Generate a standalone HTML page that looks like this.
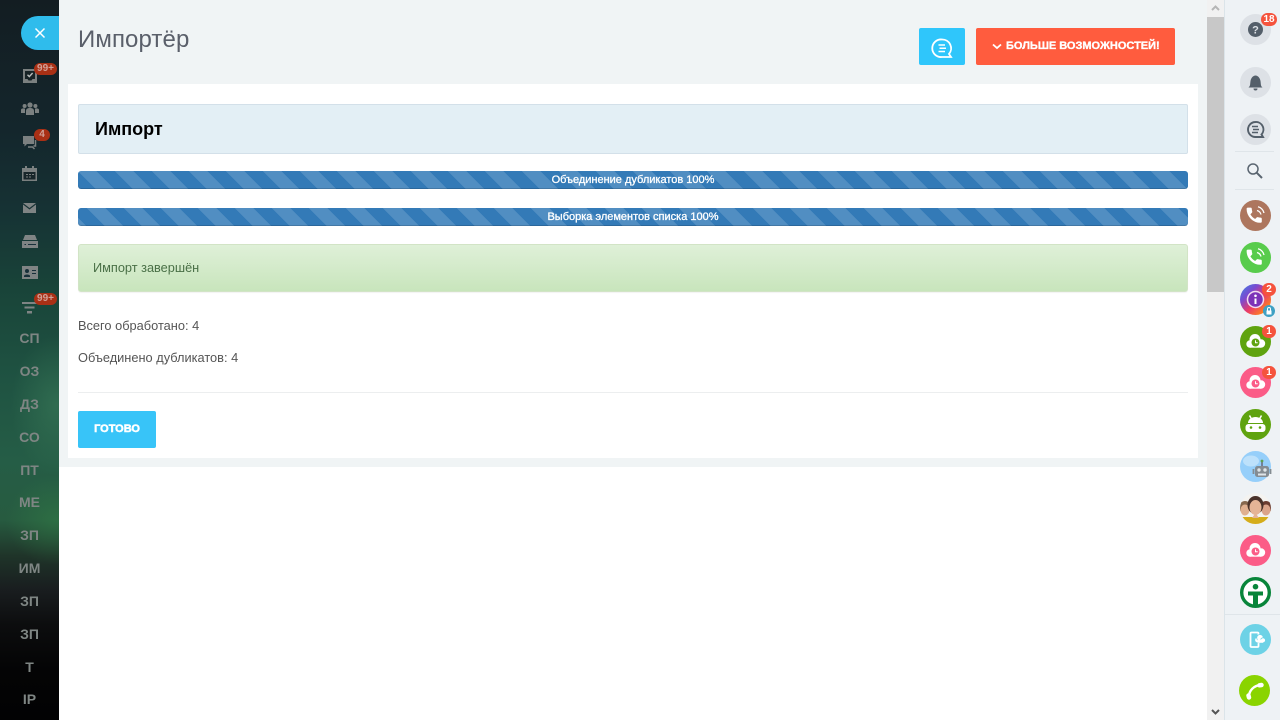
<!DOCTYPE html>
<html lang="ru"><head><meta charset="utf-8"><title>Импортёр</title>
<style>
*{box-sizing:border-box}
html,body{margin:0;padding:0;width:1280px;height:720px;overflow:hidden;background:#fff;font-family:"Liberation Sans","Noto Sans CJK SC",sans-serif}
.a{position:absolute}
#side{left:0;top:0;width:59px;height:720px;background:
radial-gradient(ellipse 45px 70px at 56px 405px,rgba(60,125,90,.55),rgba(60,125,90,0) 100%),
radial-gradient(ellipse 50px 45px at 56px 520px,rgba(50,125,70,.55),rgba(50,125,70,0) 100%),
linear-gradient(180deg,#131d22 0,#14262c 130px,#163234 210px,#194439 290px,#1f5342 380px,#255d46 460px,#275b40 520px,#1f3429 556px,#191d1f 590px,#0c0d0e 625px,#040405 670px,#020203 720px)}
.lab{position:absolute;left:0;width:59px;text-align:center;color:#7f8684;font-weight:bold;font-size:14px;line-height:16px}
.bdg{position:absolute;background:#a93015;color:#d0a097;font-size:10px;font-weight:bold;line-height:12px;height:12px;border-radius:6px;text-align:center}
#tog{left:21px;top:16px;width:38px;height:34px;background:#2fbcec;border-radius:17px 0 0 17px}
#main{left:59px;top:0;width:1148px;height:467px;background:#f0f4f5}
#card{left:68px;top:84px;width:1130px;height:374px;background:#fff}
#h1{left:78px;top:25px;font-size:24px;line-height:30px;color:#5a5f6a;letter-spacing:.1px;font-weight:normal}
#hd{left:78px;top:104px;width:1110px;height:50px;background:#e3eff5;border:1px solid #d3e0e9;border-radius:2px;font-size:18px;font-weight:bold;line-height:48px;padding-left:16px;color:#000}
.bar{position:absolute;left:78px;width:1110px;height:18px;border-radius:3px;background-color:#337ab7;background-image:linear-gradient(45deg,rgba(255,255,255,.15) 25%,transparent 25%,transparent 50%,rgba(255,255,255,.15) 50%,rgba(255,255,255,.15) 75%,transparent 75%,transparent);background-size:37px 37px;color:#fff;font-size:11px;line-height:18px;text-align:center;-webkit-text-stroke:.3px #fff;box-shadow:inset 0 -1px 0 rgba(0,0,0,.15)}
#ok{left:78px;top:244px;width:1110px;height:48px;border:1px solid #d2e4c6;border-radius:3px;background:linear-gradient(180deg,#dff0d8,#c8e5bc);color:#4a7047;font-size:12.75px;line-height:46px;padding-left:14px;box-shadow:0 1px 1px rgba(0,0,0,.05)}
.t{position:absolute;left:78px;font-size:12.8px;line-height:16px;color:#555}
#hr{left:78px;top:392px;width:1110px;height:1px;background:#eceeef}
#go{left:78px;top:411px;width:78px;height:37px;background:#38c4f8;border-radius:2px;color:#fff;font-weight:bold;font-size:11px;line-height:36px;text-align:center;-webkit-text-stroke:.5px #fff}
#b1{left:919px;top:28px;width:46px;height:37px;background:#2fc6fb;border-radius:2px}
#b2{left:976px;top:28px;width:199px;height:37px;background:#ff5c3e;border-radius:2px;color:#fff;font-weight:bold;font-size:11px;line-height:37px;padding-left:30px;white-space:nowrap;-webkit-text-stroke:.35px #fff}
#st{left:1207px;top:0;width:17px;height:720px;background:#f1f1f1}
#th{left:1207px;top:17px;width:17px;height:275px;background:#c8c8c8}
#rp{left:1224px;top:0;width:56px;height:720px;background:#eef2f5;border-left:1px solid #dbe4e9}
.ln{position:absolute;left:1235px;width:39px;height:1px;background:#dfe5e9}
svg{position:absolute;overflow:visible}
.rb{position:absolute;color:#fff;font-size:10px;font-weight:bold;text-align:center;background:#f5533d;border-radius:7px;line-height:13px;height:13px}
</style></head><body>
<div class="a" id="side"></div>
<div class="a" id="tog"></div>
<svg style="left:34px;top:27px" width="12" height="12" viewBox="0 0 12 12"><path d="M1.500 1.500L10.500 10.500M10.500 1.500L1.500 10.500" stroke="#fff" stroke-width="1.500"/></svg>

<svg style="left:22px;top:68px" width="16" height="16" viewBox="0 0 16 16"><path d="M1 1H15V15H1Z" fill="#7b8080"/><path d="M3 3H13V11H10.500L9.500 12.500H6.500L5.500 11H3Z" fill="#172326"/><path d="M5.500 6.800L7.300 8.600L10.600 5" stroke="#b8bcbc" stroke-width="1.400" fill="none"/></svg>
<div class="bdg" style="left:34px;top:63px;width:23px">99+</div>
<svg style="left:21px;top:102px" width="18" height="14" viewBox="0 0 18 14" fill="#7b8080"><circle cx="9" cy="3" r="2.600"/><circle cx="3.600" cy="4" r="2"/><circle cx="14.400" cy="4" r="2"/><path d="M5 13V9C5 6.500 7 6 9 6S13 6.500 13 9V13Z"/><path d="M0 11V8C0 6.600 1.500 6.400 3.600 6.400L4 7V11Z"/><path d="M18 11V8C18 6.600 16.500 6.400 14.400 6.400L14 7V11Z"/></svg>
<svg style="left:22px;top:135px" width="16" height="15" viewBox="0 0 16 15"><path d="M1 1H12V9H5L2.500 11.500V9H1Z" fill="#7b8080"/><path d="M13.500 5V11H11.500" stroke="#7b8080" stroke-width="1.500" fill="none"/><path d="M6 12H10.500L12.500 14" stroke="#7b8080" stroke-width="1.500" fill="none"/></svg>
<div class="bdg" style="left:34px;top:129px;width:16px">4</div>
<svg style="left:22px;top:166px" width="15" height="15" viewBox="0 0 15 15"><path d="M0 2H15V15H0Z" fill="#7b8080"/><path d="M1.500 6H13.500V13.500H1.500Z" fill="#18262a"/><path d="M3 0H5V3H3ZM10 0H12V3H10Z" fill="#7b8080"/><path d="M4 8H6V9H4ZM7 8H9V9H7ZM10 8H12V9H10ZM4 10.500H6V11.500H4ZM7 10.500H9V11.500H7Z" fill="#7b8080"/></svg>
<svg style="left:23px;top:203px" width="13" height="10" viewBox="0 0 13 10"><path d="M0 0H13L6.500 5Z" fill="#7f8484"/><path d="M0 1.500L6.500 6.500L13 1.500V10H0Z" fill="#7f8484"/></svg>
<svg style="left:22px;top:235px" width="16" height="13" viewBox="0 0 16 13" fill="#7f8484"><path d="M3 0H13L15 5H1Z"/><path d="M0 6H16V13H0Z"/><path d="M2.500 9H4V10H2.500Z" fill="#18303a"/><path d="M6 9H14V10H6Z" fill="#18303a"/></svg>
<svg style="left:22px;top:266px" width="16" height="13" viewBox="0 0 16 13"><path d="M0 0H16V13H0Z" fill="#7f8484"/><circle cx="5" cy="5" r="2" fill="#18303a"/><path d="M2 10C2 8 8 8 8 10V11H2Z" fill="#18303a"/><path d="M10 4H14V5H10ZM10 7H14V8H10Z" fill="#18303a"/></svg>
<svg style="left:22px;top:302px" width="15" height="12" viewBox="0 0 15 12" fill="#7f8484"><path d="M0 0H15V2H0ZM2.500 4.500H12.500V6.500H2.500ZM5 9H10V11.500H5Z"/></svg>
<div class="bdg" style="left:34px;top:293px;width:23px">99+</div>

<div class="lab" style="top:330px">СП</div>
<div class="lab" style="top:363px">ОЗ</div>
<div class="lab" style="top:396px">ДЗ</div>
<div class="lab" style="top:429px">СО</div>
<div class="lab" style="top:462px">ПТ</div>
<div class="lab" style="top:494px">МЕ</div>
<div class="lab" style="top:527px">ЗП</div>
<div class="lab" style="top:560px">ИМ</div>
<div class="lab" style="top:593px">ЗП</div>
<div class="lab" style="top:626px">ЗП</div>
<div class="lab" style="top:659px">Т</div>
<div class="lab" style="top:691px">IP</div>

<div class="a" id="main"></div>
<div class="a" id="card"></div>
<div class="a" id="h1">Импортёр</div>
<div class="a" id="b1"></div>
<svg style="left:931px;top:37px" width="22" height="22" viewBox="0 0 22 22" fill="none" stroke="#fff"><path d="M11 2.500A8.800 8.800 0 1 0 11 20H20L18 17A8.800 8.800 0 0 0 11 2.500Z" stroke-width="1.800"/><path d="M7.500 8H14M8.500 11.200H15M7.500 14.500H14" stroke-width="1.500"/></svg>
<div class="a" id="b2">БОЛЬШЕ ВОЗМОЖНОСТЕЙ!</div>
<svg style="left:992px;top:43px" width="10" height="7" viewBox="0 0 10 7"><path d="M1 1.500L5 5L9 1.500" stroke="#fff" stroke-width="1.800" fill="none"/></svg>
<div class="a" id="hd">Импорт</div>
<div class="bar" style="top:171px">Объединение дубликатов 100%</div>
<div class="bar" style="top:208px;background-position:9px 0">Выборка элементов списка 100%</div>
<div class="a" id="ok">Импорт завершён</div>
<div class="t" style="top:318px">Всего обработано: 4</div>
<div class="t" style="top:350px">Объединено дубликатов: 4</div>
<div class="a" id="hr"></div>
<div class="a" id="go">ГОТОВО</div>

<div class="a" id="st"></div>
<div class="a" id="th"></div>
<svg style="left:1211px;top:5px" width="9" height="6" viewBox="0 0 9 6"><path d="M1 5L4.500 1.500L8 5" stroke="#b5b5b5" stroke-width="2" fill="none"/></svg>
<svg style="left:1211px;top:709px" width="9" height="6" viewBox="0 0 9 6"><path d="M1 1L4.500 4.500L8 1" stroke="#555" stroke-width="2" fill="none"/></svg>
<div class="a" id="rp"></div>
<div class="ln" style="top:151px"></div>
<div class="ln" style="top:189px"></div>
<div class="ln" style="top:614px;left:1225px;width:55px"></div>

<svg style="left:1240px;top:14px" width="31" height="31" viewBox="0 0 31 31"><circle cx="15.500" cy="15.500" r="15.500" fill="#dde1e6"/><circle cx="15.500" cy="15.500" r="7.500" fill="#545f6a"/><text x="15.500" y="19.500" font-family="Liberation Sans" font-size="11" font-weight="bold" fill="#dde1e6" text-anchor="middle">?</text></svg>
<div class="rb" style="left:1261px;top:13px;width:16px">18</div>
<svg style="left:1240px;top:67px" width="31" height="31" viewBox="0 0 31 31"><circle cx="15.500" cy="15.500" r="15.500" fill="#dde1e6"/><path d="M8.500 20.500C10.500 19 10 17 10.500 14C11 11 13 8.500 15.500 8.500S20 11 20.500 14C21 17 20.500 19 22.500 20.500Z" fill="#545f6a"/><path d="M13.500 21.500A2 2 0 0 0 17.500 21.500Z" fill="#545f6a"/></svg>
<svg style="left:1240px;top:114px" width="31" height="31" viewBox="0 0 31 31" fill="none" stroke="#545f6a"><circle cx="15.500" cy="15.500" r="15.500" fill="#dde1e6" stroke="none"/><path d="M15.500 8A7.500 7.500 0 1 0 15.500 23H23L21.500 20.500A7.500 7.500 0 0 0 15.500 8Z" stroke-width="1.900"/><path d="M12 12.500H18M13 15.500H19M12 18.500H18" stroke-width="1.400"/></svg>
<svg style="left:1246px;top:162px" width="18" height="18" viewBox="0 0 18 18" fill="none" stroke="#5a6570"><circle cx="7" cy="7" r="5" stroke-width="1.500"/><path d="M10.800 10.800L16 16" stroke-width="2"/></svg>

<svg style="left:1240px;top:200px" width="31" height="31" viewBox="0 0 31 31"><circle cx="15.500" cy="15.500" r="15.500" fill="#ad765e"/><path transform="translate(4.600 5.600) scale(.8)" d="M6.620 10.790c1.440 2.830 3.760 5.140 6.590 6.590l2.200-2.200c.27-.27.67-.36 1.020-.24 1.120.37 2.330.57 3.570.57.550 0 1 .45 1 1V20c0 .55-.45 1-1 1-9.390 0-17-7.610-17-17 0-.55.45-1 1-1h3.500c.55 0 1 .45 1 1 0 1.250.2 2.450.57 3.570.11.350.03.74-.25 1.020l-2.200 2.200z" fill="#fff" stroke="#fff"/><path d="M17 10.500C19 11 20.500 12.500 21 14.500M18 6.800C21 7.500 23.500 10 24 13" stroke="#fff" stroke-width="1.300" fill="none"/></svg>
<svg style="left:1240px;top:242px" width="31" height="31" viewBox="0 0 31 31"><circle cx="15.500" cy="15.500" r="15.500" fill="#58cc4c"/><path transform="translate(4.600 5.600) scale(.8)" d="M6.620 10.790c1.440 2.830 3.760 5.140 6.590 6.590l2.200-2.200c.27-.27.67-.36 1.020-.24 1.120.37 2.330.57 3.570.57.550 0 1 .45 1 1V20c0 .55-.45 1-1 1-9.390 0-17-7.610-17-17 0-.55.45-1 1-1h3.500c.55 0 1 .45 1 1 0 1.250.2 2.450.57 3.570.11.350.03.74-.25 1.020l-2.200 2.200z" fill="#fff" stroke="#fff"/><path d="M17 10.500C19 11 20.500 12.500 21 14.500M18 6.800C21 7.500 23.500 10 24 13" stroke="#fff" stroke-width="1.300" fill="none"/></svg>

<svg style="left:1240px;top:284px" width="31" height="31" viewBox="0 0 31 31"><defs><linearGradient id="ig" x1="0" y1="0" x2="1" y2="1"><stop offset="0" stop-color="#3a86e6"/><stop offset=".3" stop-color="#7a4ad0"/><stop offset=".55" stop-color="#ea3a6a"/><stop offset=".8" stop-color="#fb7a2a"/><stop offset="1" stop-color="#fcae2a"/></linearGradient></defs><circle cx="15.500" cy="15.500" r="15.500" fill="url(#ig)"/><circle cx="15.500" cy="15.500" r="8" fill="#7c33b8" stroke="#f2dcef" stroke-width="1.500"/><circle cx="15.500" cy="11.800" r="1.300" fill="#fff"/><path d="M15.500 14.500V20" stroke="#fff" stroke-width="2"/></svg>
<div class="rb" style="left:1262px;top:283px;width:14px">2</div>
<svg style="left:1263px;top:305px" width="12" height="12" viewBox="0 0 12 12"><circle cx="6" cy="6" r="6" fill="#3ea1c4"/><path d="M3.500 5.500H8.500V9.500H3.500Z" fill="#fff"/><path d="M4.500 5.500V4A1.500 1.500 0 0 1 7.500 4V5.500" stroke="#fff" fill="none"/></svg>

<svg style="left:1240px;top:326px" width="31" height="31" viewBox="0 0 31 31"><circle cx="15.500" cy="15.500" r="15.500" fill="#5fa30f"/><g fill="#fff"><circle cx="10" cy="18" r="3.700"/><circle cx="15" cy="13.500" r="5.500"/><circle cx="21" cy="17.500" r="4.200"/><path d="M10 16H21V21.700H10Z"/></g><circle cx="15.500" cy="16.500" r="4" fill="#5fa30f"/><path d="M15.500 14.300V16.800H17.700" stroke="#fff" fill="none"/></svg>
<div class="rb" style="left:1262px;top:325px;width:14px">1</div>
<svg style="left:1240px;top:367px" width="31" height="31" viewBox="0 0 31 31"><circle cx="15.500" cy="15.500" r="15.500" fill="#fb5c87"/><g fill="#fff"><circle cx="10" cy="18" r="3.700"/><circle cx="15" cy="13.500" r="5.500"/><circle cx="21" cy="17.500" r="4.200"/><path d="M10 16H21V21.700H10Z"/></g><circle cx="15.500" cy="16.500" r="4" fill="#fb5c87"/><path d="M15.500 14.300V16.800H17.700" stroke="#fff" fill="none"/></svg>
<div class="rb" style="left:1262px;top:366px;width:14px">1</div>
<svg style="left:1240px;top:409px" width="31" height="31" viewBox="0 0 31 31"><circle cx="15.500" cy="15.500" r="15.500" fill="#5fa30f"/><path d="M8 14A7.500 6 0 0 1 23 14Z" fill="#fff"/><path d="M5.500 18A3 3 0 0 1 8.500 15H22.500A3 3 0 0 1 25.500 18V20A3 3 0 0 1 22.500 23H8.500A3 3 0 0 1 5.500 20Z" fill="#fff"/><circle cx="11" cy="18.500" r="1.300" fill="#5fa30f"/><circle cx="20" cy="18.500" r="1.300" fill="#5fa30f"/><path d="M9.500 6.500L11.500 10M21.500 6.500L19.500 10" stroke="#fff" stroke-width="1.500"/></svg>
<svg style="left:1240px;top:451px" width="31" height="31" viewBox="0 0 31 31"><circle cx="15.500" cy="15.500" r="15.500" fill="#96cffa"/><ellipse cx="11" cy="10" rx="8" ry="5.500" fill="#bde1fb"/><rect x="15" y="15" width="14" height="11" rx="2.500" fill="#848c92"/><path d="M13.500 18V23M30.500 18V23" stroke="#848c92" stroke-width="1.800"/><circle cx="19" cy="19" r="1.700" fill="#dfe5e8"/><circle cx="25" cy="19" r="1.700" fill="#dfe5e8"/><path d="M18 22.500H26V24.500H18Z" fill="#dfe5e8"/><path d="M22 10V15" stroke="#667" stroke-width="1.500"/><circle cx="22" cy="10" r="1.400" fill="#5fa050"/></svg>
<svg style="left:1240px;top:493px" width="31" height="31" viewBox="0 0 31 31"><defs><clipPath id="pc"><circle cx="15.500" cy="15.500" r="15.500"/></clipPath></defs><circle cx="15.500" cy="15.500" r="15.500" fill="#f4f3f0"/><g clip-path="url(#pc)"><path d="M0 31V24H31V31Z" fill="#d5ad1a"/><circle cx="5" cy="14" r="6" fill="#86684e"/><circle cx="26" cy="14" r="6" fill="#6b3c30"/><ellipse cx="5" cy="17" rx="4.500" ry="5.500" fill="#e0b090"/><ellipse cx="26" cy="17" rx="4.500" ry="5.500" fill="#dba48a"/><ellipse cx="15.500" cy="12" rx="8" ry="9" fill="#4a322a"/><ellipse cx="15.500" cy="14.500" rx="6" ry="7.500" fill="#e5b496"/><path d="M12 25L15.500 20L19 25Z" fill="#e5b496"/></g></svg>
<svg style="left:1240px;top:535px" width="31" height="31" viewBox="0 0 31 31"><circle cx="15.500" cy="15.500" r="15.500" fill="#fb5c87"/><g fill="#fff"><circle cx="10" cy="18" r="3.700"/><circle cx="15" cy="13.500" r="5.500"/><circle cx="21" cy="17.500" r="4.200"/><path d="M10 16H21V21.700H10Z"/></g><circle cx="15.500" cy="16.500" r="4" fill="#fb5c87"/><path d="M15.500 14.300V16.800H17.700" stroke="#fff" fill="none"/></svg>
<svg style="left:1240px;top:577px" width="31" height="31" viewBox="0 0 31 31"><circle cx="15.500" cy="15.500" r="13.800" fill="#fff" stroke="#08853a" stroke-width="3.400"/><circle cx="15.500" cy="9.700" r="2.800" fill="#08853a"/><path d="M8 14.500H23V18.500H18V29H13V18.500H8Z" fill="#08853a"/></svg>
<svg style="left:1240px;top:624px" width="31" height="31" viewBox="0 0 31 31"><circle cx="15.500" cy="15.500" r="15.500" fill="#6dd2e6"/><rect x="10.500" y="8.500" width="8" height="14.500" rx="1" fill="none" stroke="#fff" stroke-width="1.800"/><g fill="#fff" stroke="#6dd2e6" stroke-width=".8"><circle cx="17.500" cy="16" r="2.800"/><circle cx="20" cy="13.800" r="3.300"/><circle cx="23" cy="16.300" r="2.500"/></g><path d="M17.500 15.500H23V18.800H17.500Z" fill="#fff"/></svg>
<svg style="left:1239px;top:675px" width="31" height="31" viewBox="0 0 31 31"><circle cx="15.500" cy="15.500" r="15.500" fill="#8ad400"/><path d="M10 21.500C10 15.500 15 10.500 21.500 10" stroke="#fff" stroke-width="2.400" fill="none"/><path d="M9.500 20.500L10 22.500M20.500 10.300L22.500 10" stroke="#fff" stroke-width="4.500" stroke-linecap="round" fill="none"/></svg>
</body></html>
